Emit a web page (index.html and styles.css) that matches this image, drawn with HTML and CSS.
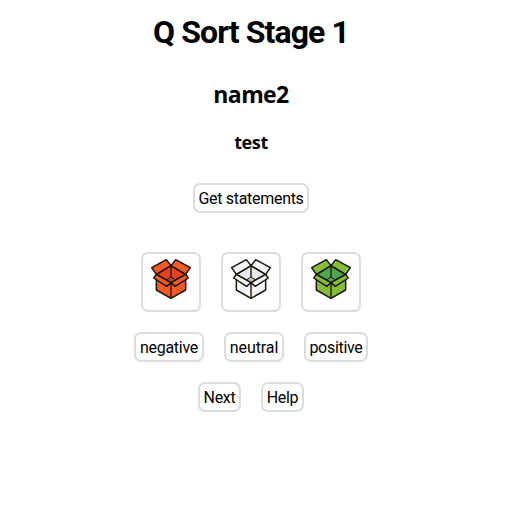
FILE: index.html
```
<!DOCTYPE html>
<html lang="en">
<head>
<meta charset="utf-8">
<title>Q Sort Stage 1</title>
<link rel="stylesheet" href="styles.css">
</head>
<body>
<svg width="0" height="0" class="defs">
  <symbol id="box" viewBox="21 18 168 168">
    <path class="side" d="M61 79L105 104L149 79V126L105 151L61 126Z"/>
    <path class="inside" d="M61 79L105 53L149 79L105 104Z"/>
    <path class="floor" d="M91 96L105 87L119 96L105 104Z"/>
    <path class="seam" d="M105 53V87M105 104V151"/>
    <path class="side" d="M47 59L91 35L105 53L61 79ZM163 59L119 35L105 53L149 79ZM61 79L53 90L92 115L105 104ZM149 79L157 90L118 115L105 104Z"/>
  </symbol>
</svg>
<main>
  <h1><span>Q Sort Stage 1</span></h1>
  <h2>name2</h2>
  <h3>test</h3>
  <div class="row"><button class="get"><span>Get statements</span></button></div>
  <div class="row icons">
    <div class="tile red"><svg><use href="#box"/></svg></div>
    <div class="tile white"><svg><use href="#box"/></svg></div>
    <div class="tile green"><svg><use href="#box"/></svg></div>
  </div>
  <div class="row">
    <button class="negative"><span>negative</span></button>
    <button class="neutral"><span>neutral</span></button>
    <button class="positive"><span>positive</span></button>
  </div>
  <div class="row">
    <button class="short"><span>Next</span></button>
    <button class="short help"><span>Help</span></button>
  </div>
</main>
</body>
</html>
```
FILE: styles.css
```
* { box-sizing: border-box; }
body { margin: 0; background: #fff; color: #000; font-family: "Open Sans", sans-serif; }
.defs { display: block; }
main { width: 502px; padding-top: 8px; text-align: center; }
h1, h2, h3 { margin: 0; font-weight: 700; }
h1 { height: 48px; font: 700 32px/48px Roboto, sans-serif; }
h1 span { display: inline-block; letter-spacing: -0.9px; }
h2 { height: 36px; margin-top: 21px; font-size: 23px; line-height: 35px; letter-spacing: -0.6px; }
h3 { height: 28px; margin-top: 15px; font-size: 18px; line-height: 28px; letter-spacing: -0.4px; }
.row { display: flex; justify-content: center; gap: 20px; margin-top: 20px; }
h3 + .row { margin-top: 27px; }
.row.icons { margin-top: 39px; }
button, .tile { border: 2px solid #dcdcdc; border-radius: 7px; background: #fff; }
button { height: 30px; padding: 1px 0 0; color: #000; font: 16px/26px Roboto, sans-serif; letter-spacing: -0.3px; white-space: nowrap; display: flex; justify-content: center; }
.get { width: 116px; }
.negative { width: 70px; }
.neutral { width: 60px; letter-spacing: -0.1px; }
.positive { width: 64px; letter-spacing: -0.3px; }
.short { width: 43px; }
.tile { width: 60px; height: 60px; }
.tile svg { display: block; width: 56px; height: 56px; stroke: #17140c; stroke-width: 4.4; stroke-linejoin: round; }
.side { fill: var(--side); }
.inside { fill: var(--inside); }
.floor { fill: var(--floor); stroke-width: 3; }
.seam { fill: none; stroke: #30200f; }
.red { --side: #f15a24; --inside: #e8421f; --floor: #b5511c; }
.white { --side: #f5f5f5; --inside: #e3e9ed; --floor: #c9c3c0; }
.green { --side: #84bd3a; --inside: #4fa64f; --floor: #4fa64f; }
```
